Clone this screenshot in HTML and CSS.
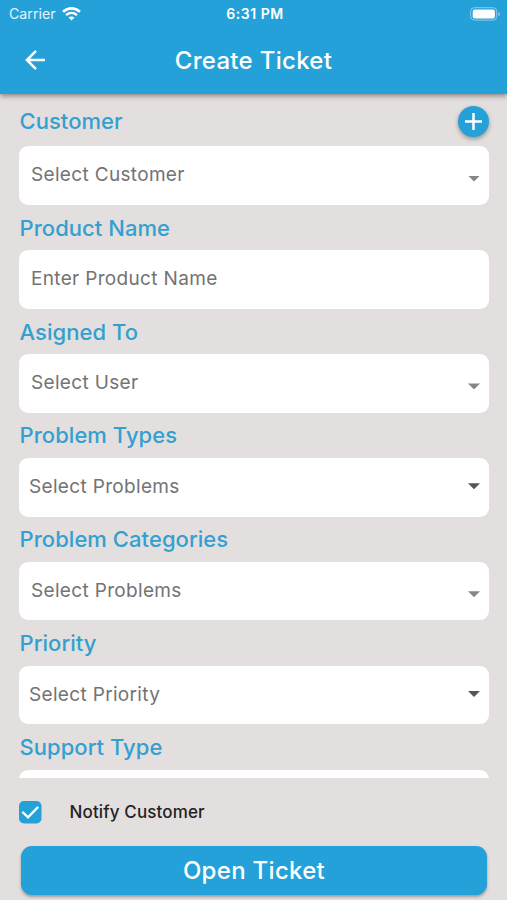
FILE: index.html
```html
<!DOCTYPE html>
<html lang="en">
<head>
<meta charset="utf-8">
<title>Create Ticket</title>
<link rel="stylesheet" href="styles.css">
</head>
<body>
<div class="screen">
  <header class="appbar">
    <div class="status">
      <div class="carrier"><span class="carrier-name">Carrier</span>
        <svg class="wifi" width="19" height="14" viewBox="0 0 19 14"><path d="M1 4.7C6 .2 13 .2 18 4.7" fill="none" stroke="#fff" stroke-width="2.8"/><path d="M4.1 8.1c3.2-2.8 7.6-2.8 10.8 0" fill="none" stroke="#fff" stroke-width="2.4"/><path d="M6.5 10.5c1.8-1.5 4.2-1.5 6 0l-3 3z" fill="#fff"/></svg>
      </div>
      <span class="time">6:31 PM</span>
      <svg class="battery" width="31" height="14" viewBox="0 0 31 14"><rect x=".7" y=".7" width="26" height="12.4" rx="3.6" fill="none" stroke="#8fcdec" stroke-width="1"/><rect x="2.7" y="2.6" width="22.2" height="8.8" rx="2" fill="#fff"/><path d="M28.3 4.7c2 .8 2 3.8 0 4.6z" fill="#8fcdec"/></svg>
    </div>
    <div class="titlebar">
      <svg class="back" width="22" height="22" viewBox="0 0 22 22"><path d="M21 11H3.2M12 1.8 2.9 11l9.1 9.2" fill="none" stroke="#fff" stroke-width="2.5"/></svg>
      <h1 class="title">Create Ticket</h1>
    </div>
  </header>
  <main class="form">
    <section class="field">
      <div class="label-row with-add"><label class="label">Customer</label>
        <button class="add"><svg width="31" height="31" viewBox="0 0 31 31"><path d="M15.5 7v17M7 15.5h17" stroke="#fff" stroke-width="2.5"/></svg></button>
      </div>
      <div class="box"><span class="value">Select Customer</span><i class="caret low"></i></div>
    </section>
    <section class="field">
      <div class="label-row"><label class="label">Product Name</label></div>
      <div class="box"><span class="value">Enter Product Name</span></div>
    </section>
    <section class="field">
      <div class="label-row"><label class="label">Asigned To</label></div>
      <div class="box"><span class="value">Select User</span><i class="caret low"></i></div>
    </section>
    <section class="field">
      <div class="label-row"><label class="label">Problem Types</label></div>
      <div class="box tight"><span class="value">Select Problems</span><i class="caret"></i></div>
    </section>
    <section class="field">
      <div class="label-row"><label class="label">Problem Categories</label></div>
      <div class="box"><span class="value">Select Problems</span><i class="caret low"></i></div>
    </section>
    <section class="field">
      <div class="label-row"><label class="label">Priority</label></div>
      <div class="box tight"><span class="value">Select Priority</span><i class="caret"></i></div>
    </section>
    <section class="field">
      <div class="label-row"><label class="label">Support Type</label></div>
      <div class="box"></div>
    </section>
  </main>
  <footer class="footer">
    <div class="notify">
      <svg class="check" width="23" height="23" viewBox="0 0 23 23"><rect width="22.5" height="22.5" rx="5" fill="#25a1d9"/><path d="M3.3 10.7 9 16.3 19.2 5.9" fill="none" stroke="#fff" stroke-width="2.3"/></svg>
      <span class="notify-text">Notify Customer</span>
    </div>
    <button class="submit">Open Ticket</button>
  </footer>
</div>
</body>
</html>
```
FILE: styles.css
```css
* { box-sizing: border-box; }
body { margin: 0; font-family: Inter, "Liberation Sans", sans-serif; }
button { border: 0; padding: 0; font-family: inherit; }
svg { display: block; flex: none; }

.screen {
  width: 507px;
  height: 900px;
  background: #e2dfde;
  display: flex;
  flex-direction: column;
  overflow: hidden;
}

.appbar {
  height: 94px;
  flex: none;
  background: #25a1d9;
  color: #fff;
  box-shadow: 0 2px 5px rgba(60, 40, 35, .5);
  z-index: 1;
}
.status {
  height: 27px;
  display: grid;
  grid-template-columns: 1fr auto 1fr;
  align-items: center;
  padding: 0 6px 0 9px;
}
.carrier { display: flex; align-items: center; gap: 6px; }
.carrier-name { font-size: 14.2px; color: #e3f4fc; }
.time { font-size: 14px; font-weight: 600; letter-spacing: .55px; }
.battery { justify-self: end; }
.titlebar {
  height: 67px;
  display: grid;
  grid-template-columns: 40px 1fr 40px;
  padding: 0 24px;
  align-items: start;
}
.back { margin-top: 22px; }
.title {
  margin: 17px 0 0;
  text-align: center;
  font-size: 24px;
  line-height: 33px;
  font-weight: 500;
  letter-spacing: .3px;
}

.form {
  height: 684px;
  flex: none;
  overflow: hidden;
  padding: 7px 18px 0 19px;
}
.field { height: 103.85px; }
.field:first-child { height: 104.1px; }
.label-row {
  height: 45.3px;
  display: flex;
  justify-content: space-between;
  align-items: center;
}
.label-row.with-add { padding-bottom: 4px; }
.with-add .label { line-height: 26px; margin-bottom: 2px; }
.label {
  font-size: 22px;
  line-height: 28px;
  font-weight: 500;
  letter-spacing: .05px;
  color: #349fd0;
  padding-left: .5px;
}
.add {
  width: 31px;
  height: 31px;
  border-radius: 50%;
  background: #25a1d9;
  box-shadow: 0 2px 4px rgba(40, 30, 30, .4);
}
.box {
  height: 58.5px;
  background: #fff;
  border-radius: 9px;
  display: flex;
  align-items: center;
  justify-content: space-between;
  padding: 0 9px 2px 12px;
}
.box.tight { padding-left: 10px; }
.value { font-size: 19px; letter-spacing: .33px; color: #737373; }
.caret {
  width: 12px;
  height: 6px;
  background: #555;
  clip-path: polygon(0 0, 100% 0, 50% 100%);
}
.caret.low { background: #868686; margin-top: 8px; }

.footer { flex: 1; padding: 22px 20px 0 19px; }
.notify { display: flex; align-items: center; gap: 27.5px; height: 24px; }
.notify-text { font-size: 17px; font-weight: 500; letter-spacing: .13px; color: #242323; }
.submit {
  display: block;
  width: 466px;
  height: 49px;
  margin: 22px 0 0 2px;
  border-radius: 11px;
  background: #25a1d9;
  color: #fff;
  font-size: 24px;
  font-weight: 500;
  letter-spacing: .3px;
  box-shadow: 0 2px 3px rgba(40, 30, 30, .35);
}
```
